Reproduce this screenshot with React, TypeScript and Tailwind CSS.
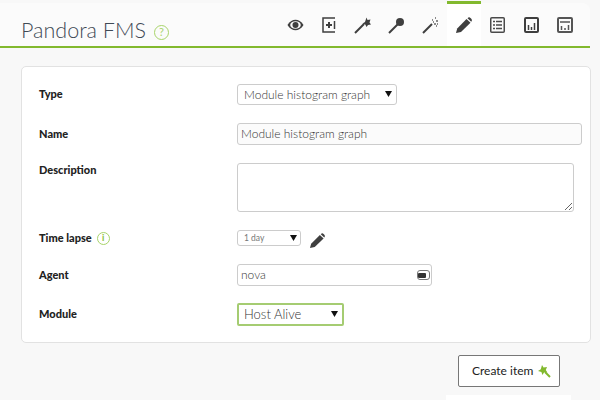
const Arrow = ({ className = '' }: { className?: string }) => (
  <svg viewBox="0 0 7 6" className={`w-[7px] h-[6px] ${className}`}>
    <path d="M0 0h7L3.5 6z" fill="#111" />
  </svg>
)

const Eye = () => (
  <svg viewBox="0 0 18 12" className="w-[17px] h-[12px]">
    <path d="M0.5 6C3 2 6 0.5 9 0.5S15 2 17.5 6C15 10 12 11.5 9 11.5S3 10 0.5 6z" fill="#3f3f3f" />
    <ellipse cx="9" cy="6" rx="5.6" ry="4" fill="#f9f9f9" />
    <circle cx="9" cy="6" r="3.2" fill="#3f3f3f" />
  </svg>
)

const PlusBox = () => (
  <svg viewBox="0 0 14 16" className="w-[14px] h-[16px]" fill="none" stroke="#3f3f3f">
    <path d="M13 1H1v14h12" strokeWidth="1.5" />
    <path d="M12.5 4v8" strokeWidth="1.5" />
    <path d="M7 5v6M4 8h6" strokeWidth="2" />
  </svg>
)

const WandStar = () => (
  <svg viewBox="0 0 17 17" className="w-[17px] h-[17px]">
    <path d="M1 16L10 7" stroke="#3f3f3f" strokeWidth="2" />
    <path d="M12.5 0.5l1 2.5L16.5 2.5l-1 3 1.5 2-3 .5-1.5 2-1.2-2.6L8.5 6.5l2.5-1.5z" fill="#3f3f3f" />
  </svg>
)

const WandGreen = () => (
  <svg viewBox="0 0 14 13" className="w-[14px] h-[13px]">
    <path d="M8 7l5 5" stroke="#82b92e" strokeWidth="2" />
    <path d="M5 0l1.6 2.6L10 2 8.8 5l1.6 2.4-3.2-.2L5.4 10 4.4 7 1 6l2.8-1.8z" fill="#82b92e" />
  </svg>
)

const WandRound = () => (
  <svg viewBox="0 0 17 17" className="w-[17px] h-[17px]">
    <path d="M1 16L10 7" stroke="#3f3f3f" strokeWidth="2" />
    <circle cx="12" cy="5" r="4" fill="#3f3f3f" />
  </svg>
)

const WandSpark = () => (
  <svg viewBox="0 0 17 17" className="w-[17px] h-[17px]">
    <path d="M1 16L10 7" stroke="#3f3f3f" strokeWidth="2" />
    <path d="M10 3h1M13 1h1M11 5h1M14 4h2M12 7h2M15 7h1M14 9h1" stroke="#666" strokeWidth="1.4" />
  </svg>
)

const Pencil = ({ className = 'w-4 h-4' }: { className?: string }) => (
  <svg viewBox="0 0 16 16" className={className}>
    <path d="M0 16l1.2-4.6L10.5 2l4 3.8L5 15z" fill="#3f3f3f" />
    <path d="M11.5 1.2C12.5 0.2 13.5 0 14.5 1l.8.8c.9 1 .7 2-.1 2.9z" fill="#3f3f3f" />
  </svg>
)

const TableIcon = () => (
  <svg viewBox="0 0 15 16" className="w-[15px] h-[16px]" fill="none" stroke="#4a4a4a">
    <rect x="0.75" y="0.75" width="13.5" height="14.5" rx="1" strokeWidth="1.5" />
    <path d="M3 4.5h2M6 4.5h6M3 8h2M6 8h6M3 11.5h2M6 11.5h6" strokeWidth="1.5" />
  </svg>
)

const BarsIcon = () => (
  <svg viewBox="0 0 15 16" className="w-[15px] h-[16px]" fill="none" stroke="#3f3f3f">
    <rect x="1" y="1" width="13" height="14" rx="1" strokeWidth="2" />
    <path d="M4.5 13V8M7.5 13v-3M10.5 13V6" strokeWidth="1.5" />
  </svg>
)

const PanelBarsIcon = () => (
  <svg viewBox="0 0 16 16" className="w-[16px] h-[16px]" fill="none" stroke="#555">
    <rect x="1" y="1" width="14" height="14" rx="1" strokeWidth="2" />
    <path d="M3 5h10" strokeWidth="1.5" />
    <path d="M4.5 13V9M8 13v-2M11.5 13V8" strokeWidth="1.5" />
  </svg>
)

const tabs = [
  { icon: <Eye /> },
  { icon: <PlusBox /> },
  { icon: <WandStar /> },
  { icon: <WandRound /> },
  { icon: <WandSpark /> },
  { icon: <Pencil />, active: true },
  { icon: <TableIcon /> },
  { icon: <BarsIcon /> },
  { icon: <PanelBarsIcon /> },
]

const Label = ({ children }: { children: React.ReactNode }) => (
  <div className="w-[198px] shrink-0 flex items-center gap-[5px] text-[11px] font-black text-[#222] font-['Lato',sans-serif]">
    {children}
  </div>
)

export default function App() {
  return (
    <div className="w-[600px] h-[400px] overflow-hidden bg-[#f8f8f8] pt-[3px] font-['Lato',sans-serif]">
      {/* Header */}
      <header className="h-[45px] w-[590px] bg-[#fbfbfb] flex justify-between items-stretch border-b-[2px] border-[#82b92e] rounded-tr-lg">
        <div className="flex items-end pl-[21px] pb-[1px] gap-[8px]">
          <h1 className="text-[21.5px] leading-[30px] font-light text-[#3f4a55]">Pandora FMS</h1>
          <span className="mb-[5px] w-[15px] h-[15px] rounded-full border-[1.5px] border-[#a8d46a] text-[#a8d46a] text-[11px] leading-[12px] text-center">?</span>
        </div>
        <nav className="flex pr-[8px] -mt-[2px]">
          {tabs.map((t, i) => (
            <div
              key={i}
              className={`w-[33.75px] flex items-center justify-center border-t-[3px] ${t.active ? 'bg-white border-[#82b92e]' : 'border-transparent'}`}
            >
              {t.icon}
            </div>
          ))}
        </nav>
      </header>

      {/* Form */}
      <main className="ml-[21px] mt-[18px] w-[570px] h-[277px] bg-white border border-[#e2e2e2] rounded-[5px] pl-[17px] pt-[17px]">
        <div className="flex items-center h-[21px]">
          <Label>Type</Label>
          <div className="relative w-[160px] h-[21px] border border-[#ccc] rounded-[3px] pl-[6px] flex items-center text-[12px] font-light text-[#333]">
            Module histogram graph
            <Arrow className="absolute right-[4px] top-[6px]" />
          </div>
        </div>

        <div className="flex items-center h-[22px] mt-[18px]">
          <Label>Name</Label>
          <div className="w-[345px] h-[22px] bg-[#fbfbfb] border border-[#ccc] rounded-[3px] pl-[3px] flex items-center text-[12px] font-light text-[#333]">
            Module histogram graph
          </div>
        </div>

        <div className="flex items-start h-[49px] mt-[18px]">
          <div className="h-[14px] flex">
            <Label>Description</Label>
          </div>
          <textarea readOnly className="w-[337px] h-[49px] bg-white border border-[#ccc] rounded-[3px] outline-none" />
        </div>

        <div className="flex items-center h-[16px] mt-[18px]">
          <Label>
            Time lapse
            <span className="w-[13px] h-[13px] rounded-full border-[1.5px] border-[#a8d46a] text-[#8cc34a] text-[9px] leading-[10px] text-center">i</span>
          </Label>
          <div className="relative w-[64px] h-[16px] border border-[#ccc] rounded-[3px] pl-[6px] flex items-center text-[8.5px] text-[#777]">
            1 day
            <Arrow className="absolute right-[3px] top-[4px]" />
          </div>
          <Pencil className="w-[15px] h-[15px] ml-[9px] mt-[4px]" />
        </div>

        <div className="flex items-center h-[22px] mt-[18px]">
          <Label>Agent</Label>
          <div className="relative w-[195px] h-[22px] border border-[#ccc] rounded-[3px] pl-[3px] flex items-center text-[12px] font-light text-[#333]">
            nova
            <span className="absolute right-[1px] top-[5px] w-[13px] h-[10px] border-[1.5px] border-[#777] rounded-[3px] flex items-center">
              <span className="w-[8px] h-[5px] bg-[#333] rounded-[1px]" />
            </span>
          </div>
        </div>

        <div className="flex items-center h-[23px] mt-[17px]">
          <Label>Module</Label>
          <div className="relative w-[107px] h-[23px] border-2 border-[#a5cc72] rounded-[2px] pl-[5px] flex items-center text-[13px] font-light text-[#333]">
            Host Alive
            <Arrow className="absolute right-[4px] top-[6px]" />
          </div>
        </div>
      </main>

      {/* Actions */}
      <div className="mt-[12px] ml-[458px] w-[102px] h-[32px] bg-white border border-[#777] rounded-[2px] pl-[13px] flex items-center gap-[4px] text-[12px] text-[#222]">
        Create item
        <WandGreen />
      </div>
      <div className="mt-[8px] ml-[446px] w-[125px] h-[5px] bg-white" />
    </div>
  )
}
